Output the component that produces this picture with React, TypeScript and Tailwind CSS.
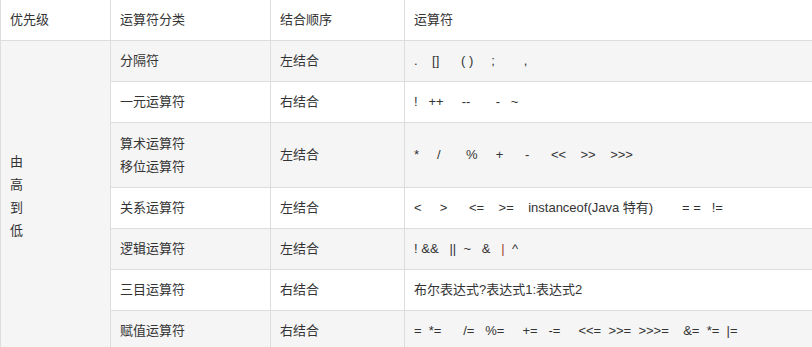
import React from "react";

type Row = {
  kind: React.ReactNode;
  assoc: string;
  ops: React.ReactNode;
  h: string;
};

const rows: Row[] = [
  { kind: "分隔符", assoc: "左结合", ops: ".    []      ( )     ;        ,", h: "h-[41px]" },
  { kind: "一元运算符", assoc: "右结合", ops: "!   ++     --       -   ~", h: "h-[41px]" },
  {
    kind: (
      <>
        算术运算符
        <br />
        移位运算符
      </>
    ),
    assoc: "左结合",
    ops: "*     /       %     +      -      <<    >>    >>>",
    h: "h-[65px]",
  },
  {
    kind: "关系运算符",
    assoc: "左结合",
    ops: "<     >      <=    >=    instanceof(Java 特有)        = =   !=",
    h: "h-[41px]",
  },
  {
    kind: "逻辑运算符",
    assoc: "左结合",
    ops: (
      <>
        {"! &&   ||  ~   &   "}
        <span className="text-[#9b3b33]">|</span>
        {"  ^"}
      </>
    ),
    h: "h-[41px]",
  },
  { kind: "三目运算符", assoc: "右结合", ops: "布尔表达式?表达式1:表达式2", h: "h-[41px]" },
  {
    kind: "赋值运算符",
    assoc: "右结合",
    ops: "=  *=      /=   %=     +=   -=     <<=  >>=  >>>=    &=  *=  |=",
    h: "h-[41px]",
  },
];

const cell = "border border-[#dddddd] pl-[9px] pr-2 align-middle";

export default function App() {
  return (
    <div
      className="w-[812px] h-[347px] overflow-hidden bg-white text-[13px] leading-[23px] text-[#333333]"
      style={{ fontFamily: '"Liberation Sans", "Noto Sans CJK SC", sans-serif' }}
    >
      <table className="w-[830px] border-collapse table-fixed text-left">
        <colgroup>
          <col className="w-[110px]" />
          <col className="w-[160px]" />
          <col className="w-[134px]" />
          <col />
        </colgroup>
        <thead>
          <tr className="h-[40px] bg-white">
            <th className={`${cell} font-normal border-t-0`}>优先级</th>
            <th className={`${cell} font-normal border-t-0`}>运算符分类</th>
            <th className={`${cell} font-normal border-t-0`}>结合顺序</th>
            <th className={`${cell} font-normal border-t-0`}>运算符</th>
          </tr>
        </thead>
        <tbody>
          {rows.map((r, i) => (
            <tr key={i} className={`${r.h} ${i % 2 === 0 ? "bg-[#f5f5f5]" : "bg-white"}`}>
              {i === 0 && (
                <td rowSpan={rows.length} className={`${cell} bg-[#f5f5f5]`}>
                  由<br />高<br />到<br />低
                </td>
              )}
              <td className={cell}>{r.kind}</td>
              <td className={cell}>{r.assoc}</td>
              <td className={`${cell} whitespace-pre`}>{r.ops}</td>
            </tr>
          ))}
        </tbody>
      </table>
    </div>
  );
}
